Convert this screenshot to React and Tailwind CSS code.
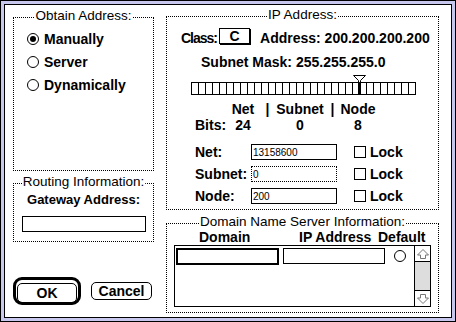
import React from 'react';

const Group = ({ title, className = '', children }) => (
  <div className={`relative border border-dotted border-black ${className}`}>
    <span className="absolute -top-[10px] left-1/2 -translate-x-1/2 whitespace-nowrap bg-white px-[1px] text-[13.5px] leading-[16px]">
      {title}
    </span>
    {children}
  </div>
);

const Radio = ({ checked }) => (
  <span className="flex h-[12px] w-[12px] shrink-0 items-center justify-center rounded-full border border-black bg-white">
    {checked && <span className="h-[6px] w-[6px] rounded-full bg-black" />}
  </span>
);

const Checkbox = () => <span className="h-[12px] w-[12px] shrink-0 border border-black bg-white" />;

const Field = ({ value, dotted, className = '' }) => (
  <div
    className={`flex h-[16px] items-center border border-black bg-white pl-[1px] text-[10px] leading-none font-normal ${
      dotted ? 'border-dotted' : ''
    } ${className}`}
  >
    <span className="mt-[1px]">{value}</span>
  </div>
);

const ArrowUp = () => (
  <svg width="14" height="14" viewBox="0 0 14 14">
    <path d="M7 2.5 L12.5 8 H9.5 V11.5 H4.5 V8 H1.5 Z" fill="white" stroke="#777" strokeWidth="1" />
  </svg>
);

const ArrowDown = () => (
  <svg width="14" height="14" viewBox="0 0 14 14">
    <path d="M7 11.5 L12.5 6 H9.5 V2.5 H4.5 V6 H1.5 Z" fill="white" stroke="#777" strokeWidth="1" />
  </svg>
);

const ipRows = [
  { label: 'Net:', value: '13158600' },
  { label: 'Subnet:', value: '0', dotted: true },
  { label: 'Node:', value: '200' },
];

export default function App() {
  return (
    <div className="h-[322px] w-[456px] border border-black font-['Liberation_Sans',Arial,sans-serif] text-black">
      <div className="h-full w-full border-[3px] border-[#c8c8ee]">
        <div className="flex h-full w-full gap-[12px] border border-black bg-white pl-[8px] pt-[11px]">
          {/* left column */}
          <div className="mt-[1px] flex w-[141px] flex-col">
            <Group title="Obtain Address:" className="h-[154px]">
              <div className="flex flex-col pl-[13px] pt-[9px]">
                {[
                  ['Manually', true],
                  ['Server', false],
                  ['Dynamically', false],
                ].map(([label, on]) => (
                  <div key={label} className="flex h-[23px] items-center gap-[5px]">
                    <Radio checked={on} />
                    <span className="text-[14px] font-bold leading-[16px]">{label}</span>
                  </div>
                ))}
              </div>
            </Group>

            <Group title="Routing Information:" className="mt-[12px] h-[59px]">
              <div className="flex flex-col items-center pt-[8px]">
                <span className="text-[13px] font-bold leading-[16px]">Gateway Address:</span>
                <Field value="" className="mt-[8px] w-[124px]" />
              </div>
            </Group>

            <div className="mt-[35px] flex items-center gap-[10px]">
              <div className="h-[28px] w-[68px] rounded-[9px] border-[3px] border-black p-[1px]">
                <button className="h-full w-full rounded-[5px] border border-black text-[14px] font-bold leading-none">
                  OK
                </button>
              </div>
              <button className="h-[18px] w-[61px] rounded-[5px] border border-black text-[14px] font-bold leading-none">
                Cancel
              </button>
            </div>
          </div>

          {/* right column */}
          <div className="flex w-[273px] flex-col">
            <Group title="IP Address:" className="h-[194px]">
              <div className="ml-[14px] mt-[11px] flex items-start">
                <span className="mt-[2px] text-[14px] font-bold leading-[16px] tracking-[-1px]">Class:</span>
                <span className="ml-[2px] flex h-[16px] w-[31px] items-center justify-center border border-black text-[14px] font-bold leading-none shadow-[1px_1px_0_#000]">
                  C
                </span>
                <span className="ml-[10px] mt-[2px] text-[14px] font-bold leading-[16px]">
                  Address: 200.200.200.200
                </span>
              </div>

              <div className="ml-[34px] mt-[8px] text-[14px] font-bold leading-[16px]">Subnet Mask: 255.255.255.0</div>

              <div className="relative ml-[24px] mt-[12px] flex w-[225px]">
                {Array.from({ length: 32 }).map((_, i) => (
                  <span
                    key={i}
                    className={`h-[13px] w-[7px] shrink-0 border-y border-l border-black ${i === 31 ? 'w-[8px] border-r' : ''}`}
                  />
                ))}
                <span className="absolute left-[167px] top-0 h-[13px] w-[3px] bg-black" />
                <svg className="absolute -top-[7px] left-[162px]" width="13" height="8" viewBox="0 0 13 8">
                  <path d="M0.5 0.5 H12.5 L7.5 5.5 V8 M0.5 0.5 L5.5 5.5 V8" fill="white" stroke="black" strokeWidth="1" />
                </svg>
              </div>

              <div className="ml-[28px] mt-[6px] flex text-[14px] font-bold leading-[16px]">
                <span className="w-[26px]" />
                <span className="w-[44px] text-center">Net</span>
                <span className="w-[5px] text-center">|</span>
                <span className="w-[60px] text-center">Subnet</span>
                <span className="w-[5px] text-center">|</span>
                <span className="w-[46px] text-center">Node</span>
              </div>
              <div className="ml-[28px] flex text-[14px] font-bold leading-[16px]">
                <span className="w-[26px] whitespace-nowrap">Bits:</span>
                <span className="w-[44px] text-center">24</span>
                <span className="w-[5px]" />
                <span className="w-[60px] text-center">0</span>
                <span className="w-[5px]" />
                <span className="w-[46px] text-center">8</span>
              </div>

              <div className="ml-[28px] mt-[11px] flex flex-col gap-[6px]">
                {ipRows.map((r) => (
                  <div key={r.label} className="flex h-[16px] items-center">
                    <span className="w-[56px] text-[14px] font-bold leading-[16px]">{r.label}</span>
                    <Field value={r.value} dotted={r.dotted} className="w-[86px]" />
                    <span className="ml-[17px] flex items-center gap-[4px]">
                      <Checkbox />
                      <span className="text-[14px] font-bold leading-[16px]">Lock</span>
                    </span>
                  </div>
                ))}
              </div>
            </Group>

            <Group title="Domain Name Server Information:" className="mt-[13px] h-[90px]">
              <div className="ml-[32px] mt-[6px] flex h-[15px] text-[14px] font-bold leading-[15px]">
                <span className="w-[100px]">Domain</span>
                <span className="w-[79px] whitespace-nowrap">IP Address</span>
                <span>Default</span>
              </div>
              <div className="ml-[7px] flex h-[62px] w-[257px] border border-black">
                <div className="flex flex-1 items-start pl-[1px] pt-[2px]">
                  <div className="h-[17px] w-[103px] border-2 border-black" />
                  <div className="ml-[4px] h-[16px] w-[102px] border border-black" />
                  <span className="ml-[9px] mt-[2px]">
                    <Radio />
                  </span>
                </div>
                <div className="flex w-[16px] flex-col border-l border-black bg-[#dddddd]">
                  <div className="flex h-[16px] items-center justify-center border-b border-black bg-white">
                    <ArrowUp />
                  </div>
                  <div className="flex-1" />
                  <div className="flex h-[16px] items-center justify-center border-t border-black bg-white">
                    <ArrowDown />
                  </div>
                </div>
              </div>
            </Group>
          </div>
        </div>
      </div>
    </div>
  );
}
